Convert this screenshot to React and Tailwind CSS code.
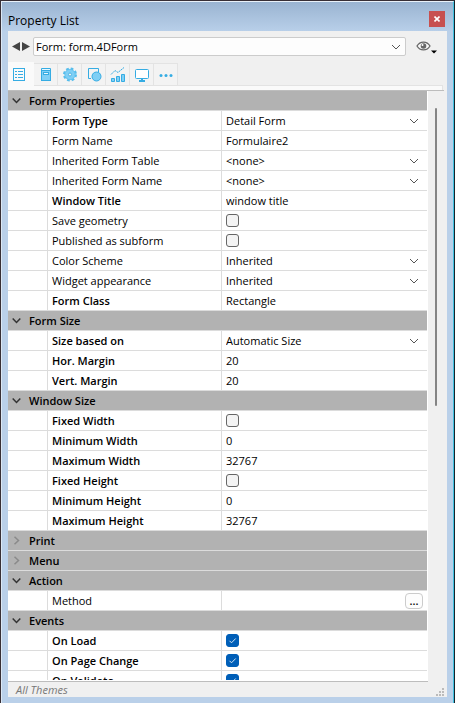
import { useState } from "react";

const SECTIONS = [
  {
    title: "Form Properties",
    open: true,
    rows: [
      { label: "Form Type", bold: true, kind: "select", value: "Detail Form" },
      { label: "Form Name", kind: "text", value: "Formulaire2" },
      { label: "Inherited Form Table", kind: "select", value: "<none>" },
      { label: "Inherited Form Name", kind: "select", value: "<none>" },
      { label: "Window Title", bold: true, kind: "text", value: "window title" },
      { label: "Save geometry", kind: "check", value: false },
      { label: "Published as subform", kind: "check", value: false },
      { label: "Color Scheme", kind: "select", value: "Inherited" },
      { label: "Widget appearance", kind: "select", value: "Inherited" },
      { label: "Form Class", bold: true, kind: "text", value: "Rectangle" },
    ],
  },
  {
    title: "Form Size",
    open: true,
    rows: [
      { label: "Size based on", bold: true, kind: "select", value: "Automatic Size" },
      { label: "Hor. Margin", bold: true, kind: "text", value: "20" },
      { label: "Vert. Margin", bold: true, kind: "text", value: "20" },
    ],
  },
  {
    title: "Window Size",
    open: true,
    rows: [
      { label: "Fixed Width", bold: true, kind: "check", value: false },
      { label: "Minimum Width", bold: true, kind: "text", value: "0" },
      { label: "Maximum Width", bold: true, kind: "text", value: "32767" },
      { label: "Fixed Height", bold: true, kind: "check", value: false },
      { label: "Minimum Height", bold: true, kind: "text", value: "0" },
      { label: "Maximum Height", bold: true, kind: "text", value: "32767" },
    ],
  },
  { title: "Print", open: false, rows: [] },
  { title: "Menu", open: false, rows: [] },
  {
    title: "Action",
    open: true,
    rows: [{ label: "Method", kind: "button", value: "..." }],
  },
  {
    title: "Events",
    open: true,
    rows: [
      { label: "On Load", bold: true, kind: "check", value: true },
      { label: "On Page Change", bold: true, kind: "check", value: true },
      { label: "On Validate", bold: true, kind: "check", value: true },
    ],
  },
];

function Chevron({ className }) {
  return (
    <svg viewBox="0 0 10 6" className={className} fill="none" stroke="currentColor" aria-hidden="true">
      <path d="M1 1l4 4 4-4" />
    </svg>
  );
}

function Check({ id, initial }) {
  const [on, setOn] = useState(initial);
  return (
    <span className="grid w-[13px]">
      <input
        id={id}
        type="checkbox"
        checked={on}
        onChange={() => setOn(!on)}
        className="col-start-1 row-start-1 size-[13px] appearance-none rounded-[3px] border border-[#666] bg-[#f4f4f4] checked:border-[#005fb8] checked:bg-[#005fb8]"
      />
      {on && (
        <svg viewBox="0 0 13 13" className="pointer-events-none col-start-1 row-start-1 size-[13px]" fill="none" stroke="#d5e6f5" aria-hidden="true">
          <path d="M3.5 6.8l2 2 4.2-4.3" />
        </svg>
      )}
    </span>
  );
}

function Value({ id, row }) {
  if (row.kind === "select") {
    return (
      <div className="flex items-center pr-2">
        <select id={id} className="-mr-[10px] h-[19px] min-w-0 flex-1 appearance-none bg-transparent p-0 outline-none">
          <option>{row.value}</option>
        </select>
        <Chevron className="pointer-events-none h-[6px] w-[10px] text-[#555]" />
      </div>
    );
  }
  if (row.kind === "check") return <Check id={id} initial={row.value} />;
  if (row.kind === "button") {
    return (
      <div className="flex justify-end pr-1">
        <button id={id} className="flex h-4 w-[18px] items-center justify-center rounded border border-[#ccc] bg-[#fdfdfd] font-semibold leading-none">
          {row.value}
        </button>
      </div>
    );
  }
  return <input id={id} type="text" defaultValue={row.value} className="block h-[19px] w-full bg-transparent p-0 outline-none" />;
}

function Section({ section }) {
  const [open, setOpen] = useState(section.open);
  return (
    <tbody>
      <tr className="h-5">
        <th colSpan={3} className="border-b border-[#dcdcdc] bg-[#b2b2b2] p-0 text-left">
          <button onClick={() => setOpen(!open)} aria-expanded={open} className="flex h-[19px] w-full items-center gap-2 pl-1 font-semibold">
            <svg viewBox="0 0 9 9" className={open ? "size-[9px] text-[#333]" : "size-[9px] text-[#8a8a8a]"} fill="none" stroke="currentColor" strokeWidth="1.5" aria-hidden="true">
              <path d={open ? "M.7 2.5l3.8 4 3.8-4" : "M2.5.7l4 3.8-4 3.8"} />
            </svg>
            {section.title}
          </button>
        </th>
      </tr>
      {open &&
        section.rows.map((row) => {
          const id = row.label.toLowerCase().replace(/[^a-z]+/g, "-");
          return (
            <tr key={row.label} className="h-5 bg-white">
              <td className="border-r border-b border-[#dcdcdc] p-0" />
              <th className="border-r border-b border-[#dcdcdc] p-0 pl-1 text-left font-normal">
                <label htmlFor={id} className={row.bold ? "block h-[19px] font-semibold" : "block h-[19px]"}>
                  {row.label}
                </label>
              </th>
              <td className="border-b border-[#dcdcdc] p-0 pl-1">
                <Value id={id} row={row} />
              </td>
            </tr>
          );
        })}
    </tbody>
  );
}

const TABS = [
  {
    name: "Objects",
    art: (
      <g>
        <rect x="2.5" y="2.5" width="11" height="12" />
        <path d="M4 5.5h2M4 8.5h2M4 11.5h2M7 5.5h5M7 8.5h5M7 11.5h5" />
      </g>
    ),
  },
  {
    name: "Library",
    art: (
      <g>
        <path d="M3.5 4.5v-2h9v2" fill="#e8f7ff" />
        <rect x="3.500" y="4.500" width="9" height="10" fill="#7fcff5" />
        <rect x="5.500" y="6.500" width="5" height="2" fill="#e8f7ff" />
      </g>
    ),
  },
  {
    name: "Settings",
    art: (
      <g>
        <circle cx="8" cy="8.500" r="5.900" stroke="#55bdec" strokeWidth="2.200" strokeDasharray="2.700 1.934" />
        <circle cx="8" cy="8.500" r="5.200" fill="#7fcff5" stroke="#55bdec" strokeWidth=".8" />
        <circle cx="8" cy="8.500" r="1.500" fill="#f3f3f3" strokeWidth=".8" />
      </g>
    ),
  },
  {
    name: "Shapes",
    art: (
      <g>
        <path d="M5 12.500H2.500v-10h10V6" />
        <circle cx="10.500" cy="10.500" r="4.500" fill="#7fcff5" />
      </g>
    ),
  },
  {
    name: "Data",
    art: (
      <g>
        <path d="M1.500 12.500h3v3h-3zM6.500 10.500h3v5h-3zM11.500 8.500h3v7h-3z" fill="#7fcff5" />
        <path d="M1 8.500l4-4 3 2 6-5" strokeDasharray="2 .6" />
      </g>
    ),
  },
  {
    name: "Display",
    art: (
      <g>
        <rect x="1.500" y="3.500" width="13" height="9" rx="1" fill="#fff" />
        <path d="M8 13v2M5 15h6" strokeWidth="2" />
      </g>
    ),
  },
  {
    name: "More",
    art: (
      <g fill="#35ace3" stroke="none">
        <circle cx="3" cy="9.500" r="1.500" />
        <circle cx="8" cy="9.500" r="1.500" />
        <circle cx="13" cy="9.500" r="1.500" />
      </g>
    ),
  },
];

function Tabs() {
  const [active, setActive] = useState(0);
  return (
    <div role="tablist" className="flex h-6 items-end">
      {TABS.map((tab, i) => (
        <button
          key={tab.name}
          role="tab"
          aria-label={tab.name}
          aria-selected={i === active}
          onClick={() => setActive(i)}
          className={
            i === active
              ? "flex h-6 w-[26px] items-center bg-[#fafafa] pl-[3px]"
              : "flex h-[23px] w-6 items-center justify-center border-y border-r border-[#e3e3e3] bg-[#f3f3f3]"
          }
        >
          <svg viewBox="0 0 16 17" className="h-[17px] w-4" fill="none" stroke="#35ace3" aria-hidden="true">
            {tab.art}
          </svg>
        </button>
      ))}
      <div className="mr-1 flex-1 border-b border-[#e3e3e3]" />
    </div>
  );
}

export default function App() {
  return (
    <div className="flex h-screen flex-col border-x border-t border-l-[#382f35] border-r-[#15232b] border-t-[#382f35] bg-[#bad0e9] font-['Open_Sans','Noto_Sans',sans-serif] text-[11px] leading-[19px] text-black">
      <div className="flex min-h-0 flex-1 flex-col border-t border-r border-l border-t-[#e9f1f9] border-r-[#3fc1e0] border-l-[#dce8f5]">
        <header className="flex h-[29px] items-center justify-between bg-linear-to-b from-[#9ab4d1] to-[#b8cfe9] pr-2 pl-[6px]">
          <h1 className="pt-2 text-[12px]">Property List</h1>
          <button aria-label="Close" className="mt-1 flex size-4 items-center justify-center bg-[#c75050]">
            <svg viewBox="0 0 6 6" className="size-[6px]" stroke="#fff" strokeWidth="1.600" aria-hidden="true">
              <path d="M.5.5l5 5M5.500.5l-5 5" />
            </svg>
          </button>
        </header>

        <main className="mx-[6px] mb-[6px] flex min-h-0 flex-1 flex-col bg-[#f0f0f0]">
          <div className="flex h-[31px] items-center pr-[9px] pl-1">
            <button aria-label="Previous" className="flex w-[9px]">
              <svg viewBox="0 0 8 9" className="h-[9px] w-2" fill="#444" aria-hidden="true"><path d="M8 0v9L0 4.500z" /></svg>
            </button>
            <button aria-label="Next" className="ml-[1px] flex w-[11px]">
              <svg viewBox="0 0 8 9" className="h-[9px] w-2" fill="#444" aria-hidden="true"><path d="M0 0v9l8-4.500z" /></svg>
            </button>
            <div className="flex h-[19px] min-w-0 flex-1 items-center rounded-[2px] border border-[#ccc] bg-[#fdfdfd] pr-1 pl-[2px]">
              <select aria-label="Selected object" className="-mr-[10px] min-w-0 flex-1 appearance-none bg-transparent p-0 outline-none">
                <option>Form: form.4DForm</option>
              </select>
              <Chevron className="pointer-events-none h-[6px] w-[10px] text-[#555]" />
            </div>
            <button aria-label="View options" className="ml-[10px] flex items-end">
              <svg viewBox="0 0 22 14" className="h-[14px] w-[22px]" aria-hidden="true">
                <path d="M1 6c3-5.200 10-5.200 13 0-3 5.200-10 5.200-13 0z" fill="#f8f8f8" stroke="#666" strokeWidth="1.300" />
                <circle cx="7.500" cy="6" r="2.800" fill="#666" />
                <circle cx="6.500" cy="5" r="1" fill="#fff" />
                <path d="M15 10.500h6l-3 3z" fill="#000" />
              </svg>
            </button>
          </div>

          <Tabs />
          <div className="mr-1 h-1 border-r border-[#e3e3e3] bg-[#fafafa]" />
          <div className="mr-[3px] h-px bg-[#bdbdbd]" />

          <div className="flex min-h-0 flex-1">
            <div className="flex min-w-0 flex-1 flex-col border-b border-[#bdbdbd] bg-white pr-px pb-px">
              <div className="min-h-0 flex-1 overflow-hidden">
                <table className="w-full table-fixed border-separate border-spacing-0">
                  <colgroup>
                    <col className="w-10" />
                    <col className="w-[174px]" />
                    <col />
                  </colgroup>
                  {SECTIONS.map((section) => (
                    <Section key={section.title} section={section} />
                  ))}
                </table>
              </div>
            </div>
            <div className="w-[19px] pt-[17px] pl-[7px]">
              <div className="h-[52%] w-[2px] rounded bg-[#858585]" />
            </div>
          </div>

          <footer className="flex h-[15px] items-center justify-between pr-[3px] pl-2 text-[#777] italic">
            <span className="leading-[15px]">All Themes</span>
            <svg viewBox="0 0 8 8" className="mt-1 size-2" fill="#bbb" aria-hidden="true">
              <path d="M6 0h2v2H6zM3 3h2v2H3zM6 3h2v2H6zM0 6h2v2H0zM3 6h2v2H3zM6 6h2v2H6z" />
            </svg>
          </footer>
        </main>
      </div>
    </div>
  );
}
